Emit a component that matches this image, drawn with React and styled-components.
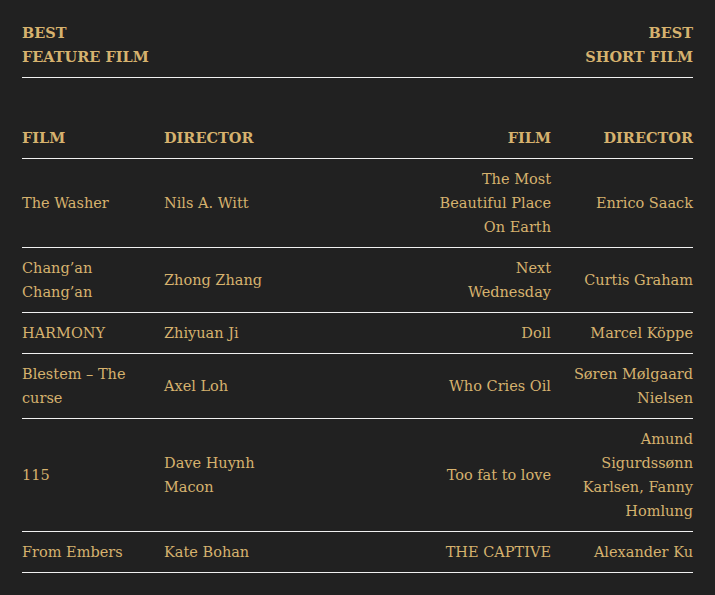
import React from 'react';
import styled, { createGlobalStyle } from 'styled-components';

const GlobalStyle = createGlobalStyle`
    html, body {
        margin: 0;
        padding: 0;
        background-color: #212121;
    }
    body {
        font-family: "DejaVu Serif", "Liberation Serif", serif;
        color: #d6b26e;
    }
`;

const Page = styled.div`
    padding: 21px 22px 22px;
    min-height: 595px;
    box-sizing: border-box;
    background-color: #212121;
    font-size: 14.5px;
    line-height: 24px;
`;

const AwardBar = styled.div`
    display: flex;
    justify-content: space-between;
    align-items: flex-end;
    padding-bottom: 8px;
    border-bottom: 1px solid #f0f0f0;
    margin-bottom: 40px;
`;

const AwardTitle = styled.h2`
    margin: 0;
    font-size: inherit;
    font-weight: bold;
    text-transform: uppercase;
    text-align: ${({ align }) => align || 'left'};
`;

const Table = styled.table`
    width: 100%;
    border-collapse: collapse;
    table-layout: fixed;
`;

const cellPadding = ({ align, inner }) => {
    const gap = inner ? '73.5px' : '22px';
    return align === 'left' ? `padding-right: ${gap};` : `padding-left: ${gap};`;
};

const HeadCell = styled.th`
    font-weight: bold;
    padding: 8px 0;
    vertical-align: middle;
    text-align: ${({ align }) => align};
    ${cellPadding}
`;

const Row = styled.tr`
    border-bottom: 1px solid #f0f0f0;
`;

const Cell = styled.td`
    padding: 8px 0;
    vertical-align: middle;
    text-align: ${({ align }) => align};
    ${cellPadding}
`;

const films = [
    ['The Washer', 'Nils A. Witt', 'The Most Beautiful Place On Earth', 'Enrico Saack'],
    ['Chang’an Chang’an', 'Zhong Zhang', 'Next Wednesday', 'Curtis Graham'],
    ['HARMONY', 'Zhiyuan Ji', 'Doll', 'Marcel Köppe'],
    ['Blestem – The curse', 'Axel Loh', 'Who Cries Oil', 'Søren Mølgaard Nielsen'],
    ['115', 'Dave Huynh Macon', 'Too fat to love', 'Amund Sigurdssønn Karlsen, Fanny Homlung'],
    ['From Embers', 'Kate Bohan', 'THE CAPTIVE', 'Alexander Ku'],
];

const App = () => (
    <>
        <GlobalStyle />
        <Page>
            <AwardBar>
                <AwardTitle>Best<br />Feature Film</AwardTitle>
                <AwardTitle align="right">Best<br />Short Film</AwardTitle>
            </AwardBar>
            <Table>
                <colgroup>
                    <col style={{ width: 142 }} />
                    <col />
                    <col />
                    <col style={{ width: 142 }} />
                </colgroup>
                <thead>
                    <Row>
                        <HeadCell align="left">FILM</HeadCell>
                        <HeadCell align="left" inner>DIRECTOR</HeadCell>
                        <HeadCell align="right" inner>FILM</HeadCell>
                        <HeadCell align="right">DIRECTOR</HeadCell>
                    </Row>
                </thead>
                <tbody>
                    {films.map((row) => (
                        <Row key={row[0]}>
                            <Cell align="left">{row[0]}</Cell>
                            <Cell align="left" inner>{row[1]}</Cell>
                            <Cell align="right" inner>{row[2]}</Cell>
                            <Cell align="right">{row[3]}</Cell>
                        </Row>
                    ))}
                </tbody>
            </Table>
        </Page>
    </>
);

export default App;
